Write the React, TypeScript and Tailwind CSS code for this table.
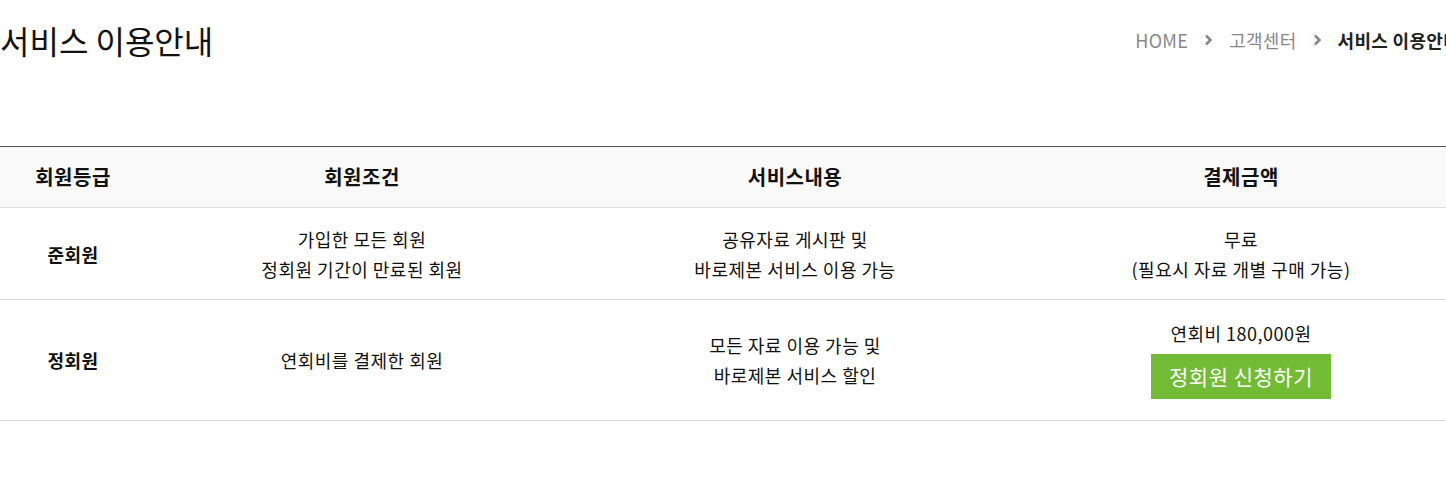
const font = "font-['Malgun_Gothic','Noto_Sans_CJK_KR','Noto_Sans',sans-serif]";

function Chevron() {
  return (
    <svg width="9" height="12" viewBox="0 0 9 12" className="mx-[16px]">
      <path d="M2 1.5 L6.5 6 L2 10.5" fill="none" stroke="#888" strokeWidth="2.6" />
    </svg>
  );
}

const rows = [
  {
    grade: "준회원",
    cond: ["가입한 모든 회원", "정회원 기간이 만료된 회원"],
    service: ["공유자료 게시판 및", "바로제본 서비스 이용 가능"],
    h: "h-[92px]",
  },
  {
    grade: "정회원",
    cond: ["연회비를 결제한 회원"],
    service: ["모든 자료 이용 가능 및", "바로제본 서비스 할인"],
    h: "h-[121px]",
  },
];

const cols = "grid grid-cols-[146px_432px_434px_1fr]";

export default function App() {
  return (
    <div className={`w-full overflow-hidden bg-white text-[#111] ${font}`}>
      <div className="w-[1470px]">
        <div className="flex items-center justify-between h-[84px]">
          <h1 className="text-[32px] leading-[40px] font-normal text-[#111] -mt-[4px]">서비스 이용안내</h1>
          <div className="flex items-center text-[18px] tracking-[0.3px] pr-[10px] -mt-[4px]">
            <span className="text-[#888]">HOME</span>
            <Chevron />
            <span className="text-[#888]">고객센터</span>
            <Chevron />
            <span className="font-bold text-[#222]">서비스 이용안내</span>
          </div>
        </div>

        <div className="mt-[62px] border-t border-[#555]">
          <div className={`${cols} h-[61px] bg-[#f9f9f9] border-b border-[#ddd] items-center text-center text-[20px] tracking-[0.5px] font-bold`}>
            <div>회원등급</div>
            <div>회원조건</div>
            <div>서비스내용</div>
            <div>결제금액</div>
          </div>

          {rows.map((r, i) => (
            <div key={r.grade} className={`${cols} ${r.h} border-b border-[#ddd] items-center text-center text-[18px] tracking-[0.5px] leading-[30px]`}>
              <div className="font-bold">{r.grade}</div>
              <div>
                {r.cond.map((c) => (
                  <div key={c}>{c}</div>
                ))}
              </div>
              <div>
                {r.service.map((c) => (
                  <div key={c}>{c}</div>
                ))}
              </div>
              {i === 0 ? (
                <div>
                  <div>무료</div>
                  <div>(필요시 자료 개별 구매 가능)</div>
                </div>
              ) : (
                <div className="flex flex-col items-center -mt-[4px]">
                  <div>연회비 180,000원</div>
                  <button className="mt-[6px] w-[180px] h-[45px] bg-[#72bb34] text-white text-[21px] tracking-[0.5px]">정회원 신청하기</button>
                </div>
              )}
            </div>
          ))}
        </div>
      </div>
    </div>
  );
}
